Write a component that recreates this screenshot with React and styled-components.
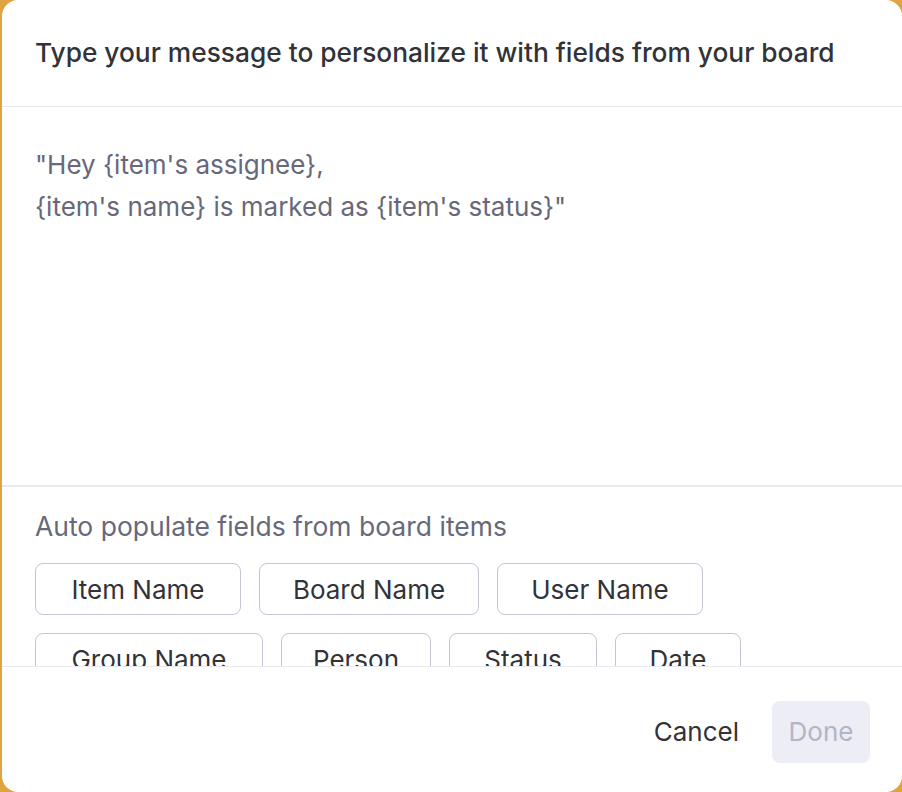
import React from 'react';
import styled, { createGlobalStyle } from 'styled-components';

const GlobalStyle = createGlobalStyle`
  html, body {
    margin: 0;
    padding: 0;
    background: #dfa340;
  }
  body {
    font-family: Inter, "Noto Sans", sans-serif;
    -webkit-font-smoothing: antialiased;
  }
`;

const FIELDS = [
  { label: 'Item Name', width: 206 },
  { label: 'Board Name', width: 220 },
  { label: 'User Name', width: 206 },
  { label: 'Group Name', width: 228 },
  { label: 'Person', width: 150 },
  { label: 'Status', width: 148 },
  { label: 'Date', width: 126 },
];

function App() {
  return (
    <>
      <GlobalStyle />
      <Modal>
        <Header>
          <Title>Type your message to personalize it with fields from your board</Title>
        </Header>
        <Editor>
          "Hey {'{'}item's assignee{'}'},
          <br />
          {'{'}item's name{'}'} is marked as {'{'}item's status{'}'}"
        </Editor>
        <Fields>
          <Label>Auto populate fields from board items</Label>
          <ChipList>
            {FIELDS.map(f => (
              <Chip key={f.label} $w={f.width}>{f.label}</Chip>
            ))}
          </ChipList>
        </Fields>
        <Footer>
          <TextButton>Cancel</TextButton>
          <PrimaryButton disabled>Done</PrimaryButton>
        </Footer>
      </Modal>
    </>
  );
}

export default App;

const Modal = styled.div`
  margin-left: 2px;
  width: 900px;
  height: 792px;
  background: #fff;
  border-radius: 16px;
  display: flex;
  flex-direction: column;
  overflow: hidden;
`;

const Header = styled.div`
  height: 107px;
  flex-shrink: 0;
  box-sizing: border-box;
  display: flex;
  align-items: center;
  padding: 0 33px 2px;
  border-bottom: 1px solid #e6e9ef;
`;

const Title = styled.h2`
  margin: 0;
  font-size: 26.3px;
  font-weight: 500;
  color: #323338;
  white-space: nowrap;
`;

const Editor = styled.div`
  height: 380px;
  flex-shrink: 0;
  box-sizing: border-box;
  padding: 37px 33px 0;
  font-size: 26px;
  line-height: 42px;
  color: #676879;
  border-bottom: 2px solid #e6e9ef;
`;

const Fields = styled.div`
  height: 179px;
  flex-shrink: 0;
  overflow: hidden;
  padding: 24px 33px 0;
  box-sizing: border-box;
`;

const Label = styled.div`
  font-size: 26.5px;
  line-height: 30px;
  color: #676879;
  margin-bottom: 22px;
`;

const ChipList = styled.div`
  display: flex;
  flex-wrap: wrap;
  gap: 18px;
`;

const Chip = styled.button`
  width: ${p => p.$w}px;
  height: 52px;
  padding: 0;
  border: 1px solid #c3c6d4;
  border-radius: 8px;
  background: #fff;
  font-family: inherit;
  font-size: 26px;
  color: #323338;
  cursor: pointer;
`;

const Footer = styled.div`
  flex: 1;
  border-top: 1px solid #e6e9ef;
  display: flex;
  align-items: center;
  justify-content: flex-end;
  gap: 17px;
  padding: 4px 32px 0;
`;

const TextButton = styled.button`
  height: 62px;
  padding: 0 16px;
  border: none;
  background: transparent;
  font-family: inherit;
  font-size: 26px;
  color: #323338;
  border-radius: 8px;
  cursor: pointer;
`;

const PrimaryButton = styled(TextButton)`
  width: 98px;
  padding: 0;
  background: #ecedf5;
  color: #b3b5c4;
  cursor: not-allowed;
`;
